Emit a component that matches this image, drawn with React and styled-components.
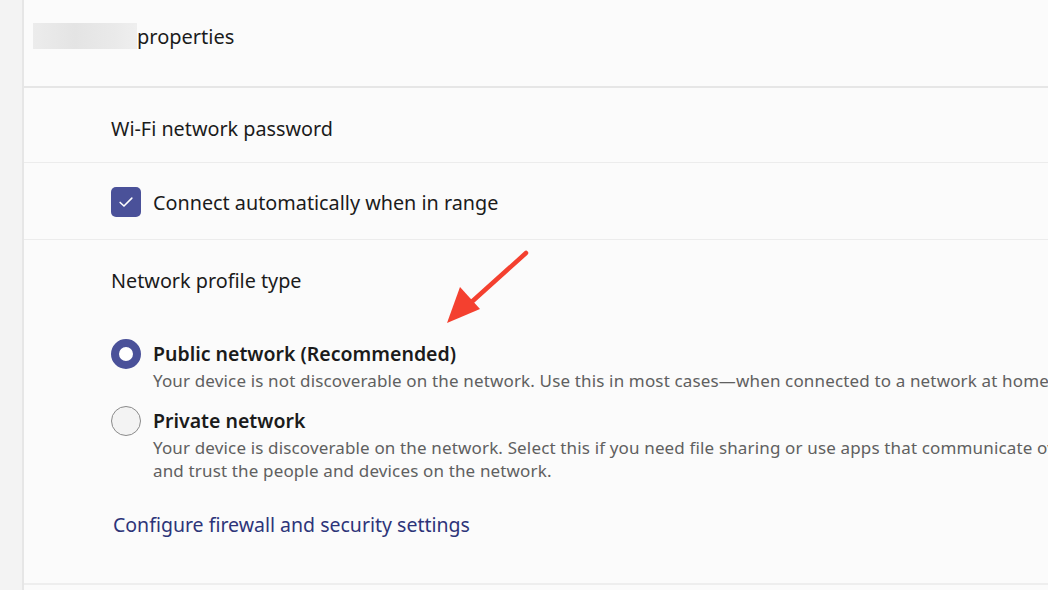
import React from 'react';
import styled, { createGlobalStyle } from 'styled-components';

const GlobalStyle = createGlobalStyle`
  html, body {
    margin: 0;
    padding: 0;
    overflow: hidden;
    background: #fbfbfb;
  }
  body {
    font-family: "Noto Sans", "Open Sans", sans-serif;
    color: #1b1b1b;
  }
`;

const Page = styled.div`
  display: flex;
  width: 1048px;
  height: 590px;
  overflow: hidden;
  position: relative;
`;

const Rail = styled.div`
  width: 22px;
  flex-shrink: 0;
  background: #f3f3f3;
  border-right: 2px solid #e6e6e6;
`;

const Panel = styled.div`
  flex: 1;
  min-width: 0;
  background: #fbfbfb;
  display: flex;
  flex-direction: column;
`;

const Header = styled.div`
  height: 88px;
  box-sizing: border-box;
  display: flex;
  align-items: center;
  padding: 0 0 14px 9px;
  border-bottom: 2px solid #e6e6e6;
  font-size: 20px;
`;

const Blur = styled.div`
  width: 104px;
  height: 26px;
  background: linear-gradient(90deg, #ececec, #e4e4e4 40%, #eaeaea 80%, #efefef);
`;

const Row = styled.div`
  height: ${({ h }) => h}px;
  box-sizing: border-box;
  display: flex;
  align-items: center;
  padding: ${({ pt }) => pt || 0}px 0 0 87px;
  border-bottom: 1px solid #ececec;
  font-size: 19.8px;
  white-space: nowrap;
`;

const Check = styled.div`
  width: 30px;
  height: 30px;
  border-radius: 5px;
  background: #4a5199;
  display: flex;
  align-items: center;
  justify-content: center;
  margin-right: 12px;
`;

const Section = styled.div`
  height: 345px;
  box-sizing: border-box;
  border-bottom: 2px solid #eeeeee;
  padding-left: 87px;
  display: flex;
  flex-direction: column;
  white-space: nowrap;
`;

const SectionTitle = styled.div`
  font-size: 19.8px;
  margin-top: 27px;
  height: 28px;
  line-height: 28px;
`;

const Option = styled.div`
  display: flex;
  align-items: flex-start;
  margin-top: ${({ top }) => top}px;
`;

const Radio = styled.div`
  width: 30px;
  height: 30px;
  box-sizing: border-box;
  border-radius: 50%;
  flex-shrink: 0;
  margin-right: 12px;
  ${({ checked }) =>
    checked
      ? 'background: #fff; border: 8px solid #4a5199;'
      : 'background: #f3f3f3; border: 1.5px solid #8a8a8a;'}
`;

const OptionText = styled.div`
  display: flex;
  flex-direction: column;
`;

const OptionTitle = styled.div`
  font-size: 19.5px;
  font-weight: 600;
  line-height: 30px;
  height: 30px;
`;

const Desc = styled.div`
  font-size: 17px;
  letter-spacing: 0.15px;
  color: #606060;
  line-height: 23px;
`;

const Link = styled.a`
  font-size: 19.5px;
  color: #2d3479;
  text-decoration: none;
  margin-top: 29px;
  margin-left: 2px;
`;

const Arrow = styled.svg`
  position: absolute;
  left: 440px;
  top: 245px;
`;

export default function App() {
  return (
    <>
      <GlobalStyle />
      <Page>
        <Rail />
        <Panel>
          <Header>
            <Blur />
            properties
          </Header>
          <Row h={75} pt={6}>Wi-Fi network password</Row>
          <Row h={77} pt={2}>
            <Check>
              <svg width="18" height="18" viewBox="0 0 16 16">
                <path d="M2.8 8.4 L6.2 11.6 L13.2 4.6" fill="none" stroke="#fff" strokeWidth="1.4" strokeLinecap="round" strokeLinejoin="round" />
              </svg>
            </Check>
            Connect automatically when in range
          </Row>
          <Section>
            <SectionTitle>Network profile type</SectionTitle>
            <Option top={44}>
              <Radio checked />
              <OptionText>
                <OptionTitle>Public network (Recommended)</OptionTitle>
                <Desc>Your device is not discoverable on the network. Use this in most cases—when connected to a network at home, work, or in a public place.</Desc>
              </OptionText>
            </Option>
            <Option top={14}>
              <Radio />
              <OptionText>
                <OptionTitle>Private network</OptionTitle>
                <Desc>Your device is discoverable on the network. Select this if you need file sharing or use apps that communicate over this network. You should know</Desc>
                <Desc>and trust the people and devices on the network.</Desc>
              </OptionText>
            </Option>
            <Link href="#">Configure firewall and security settings</Link>
          </Section>
        </Panel>
        <Arrow width="100" height="90" viewBox="0 0 100 90">
          <line x1="86" y1="8" x2="26" y2="62" stroke="#f4402f" strokeWidth="4.5" strokeLinecap="round" />
          <polygon points="7,78 20,42 40,64" fill="#f4402f" />
        </Arrow>
      </Page>
    </>
  );
}
